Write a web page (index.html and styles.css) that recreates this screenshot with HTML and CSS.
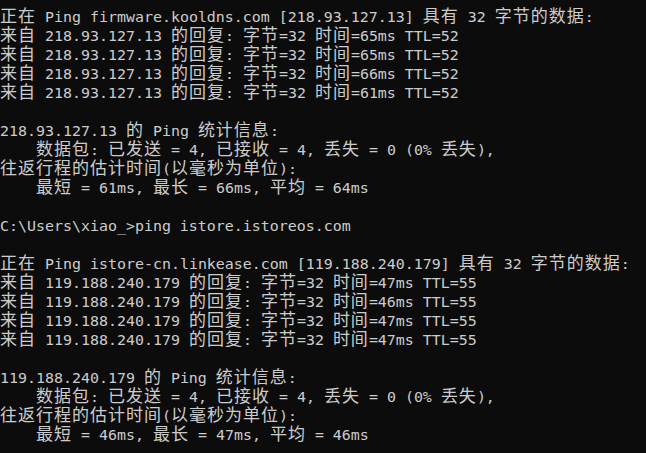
FILE: index.html
```html
<!DOCTYPE html>
<html lang="zh-CN">
<head>
<meta charset="utf-8">
<title>ping</title>
<link rel="stylesheet" href="styles.css">
</head>
<body>
<div class="term">
<div class="ln"><span class="c">正在</span> Ping firmware.kooldns.com [218.93.127.13] <span class="c">具有</span> 32 <span class="c">字节的数据</span>:</div>
<div class="ln"><span class="c">来自</span> 218.93.127.13 <span class="c">的回复</span>: <span class="c">字节</span>=32 <span class="c">时间</span>=65ms TTL=52</div>
<div class="ln"><span class="c">来自</span> 218.93.127.13 <span class="c">的回复</span>: <span class="c">字节</span>=32 <span class="c">时间</span>=65ms TTL=52</div>
<div class="ln"><span class="c">来自</span> 218.93.127.13 <span class="c">的回复</span>: <span class="c">字节</span>=32 <span class="c">时间</span>=66ms TTL=52</div>
<div class="ln"><span class="c">来自</span> 218.93.127.13 <span class="c">的回复</span>: <span class="c">字节</span>=32 <span class="c">时间</span>=61ms TTL=52</div>
<div class="ln"> </div>
<div class="ln">218.93.127.13 <span class="c">的</span> Ping <span class="c">统计信息</span>:</div>
<div class="ln">    <span class="c">数据包</span>: <span class="c">已发送</span> = 4, <span class="c">已接收</span> = 4, <span class="c">丢失</span> = 0 (0% <span class="c">丢失</span>),</div>
<div class="ln"><span class="c">往返行程的估计时间</span>(<span class="c">以毫秒为单位</span>):</div>
<div class="ln">    <span class="c">最短</span> = 61ms, <span class="c">最长</span> = 66ms, <span class="c">平均</span> = 64ms</div>
<div class="ln"> </div>
<div class="ln">C:\Users\xiao_&gt;ping istore.istoreos.com</div>
<div class="ln"> </div>
<div class="ln"><span class="c">正在</span> Ping istore-cn.linkease.com [119.188.240.179] <span class="c">具有</span> 32 <span class="c">字节的数据</span>:</div>
<div class="ln"><span class="c">来自</span> 119.188.240.179 <span class="c">的回复</span>: <span class="c">字节</span>=32 <span class="c">时间</span>=47ms TTL=55</div>
<div class="ln"><span class="c">来自</span> 119.188.240.179 <span class="c">的回复</span>: <span class="c">字节</span>=32 <span class="c">时间</span>=46ms TTL=55</div>
<div class="ln"><span class="c">来自</span> 119.188.240.179 <span class="c">的回复</span>: <span class="c">字节</span>=32 <span class="c">时间</span>=47ms TTL=55</div>
<div class="ln"><span class="c">来自</span> 119.188.240.179 <span class="c">的回复</span>: <span class="c">字节</span>=32 <span class="c">时间</span>=47ms TTL=55</div>
<div class="ln"> </div>
<div class="ln">119.188.240.179 <span class="c">的</span> Ping <span class="c">统计信息</span>:</div>
<div class="ln">    <span class="c">数据包</span>: <span class="c">已发送</span> = 4, <span class="c">已接收</span> = 4, <span class="c">丢失</span> = 0 (0% <span class="c">丢失</span>),</div>
<div class="ln"><span class="c">往返行程的估计时间</span>(<span class="c">以毫秒为单位</span>):</div>
<div class="ln">    <span class="c">最短</span> = 46ms, <span class="c">最长</span> = 47ms, <span class="c">平均</span> = 46ms</div>
</div>
</body>
</html>
```

FILE: styles.css
```css
html, body {
  margin: 0;
  padding: 0;
  background: #0c0c0c;
  height: 100%;
  overflow: hidden;
}

.term {
  padding: 8px 0 0 0;
  color: #cccccc;
  font-family: "DejaVu Sans Mono", "Liberation Mono", monospace;
  font-size: 14.95px;
  line-height: 19px;
}

.ln {
  height: 19px;
  white-space: pre;
}

.c {
  font-family: "Noto Sans CJK SC", sans-serif;
  font-size: 17px;
  letter-spacing: 1px;
  line-height: 0;
}
```
